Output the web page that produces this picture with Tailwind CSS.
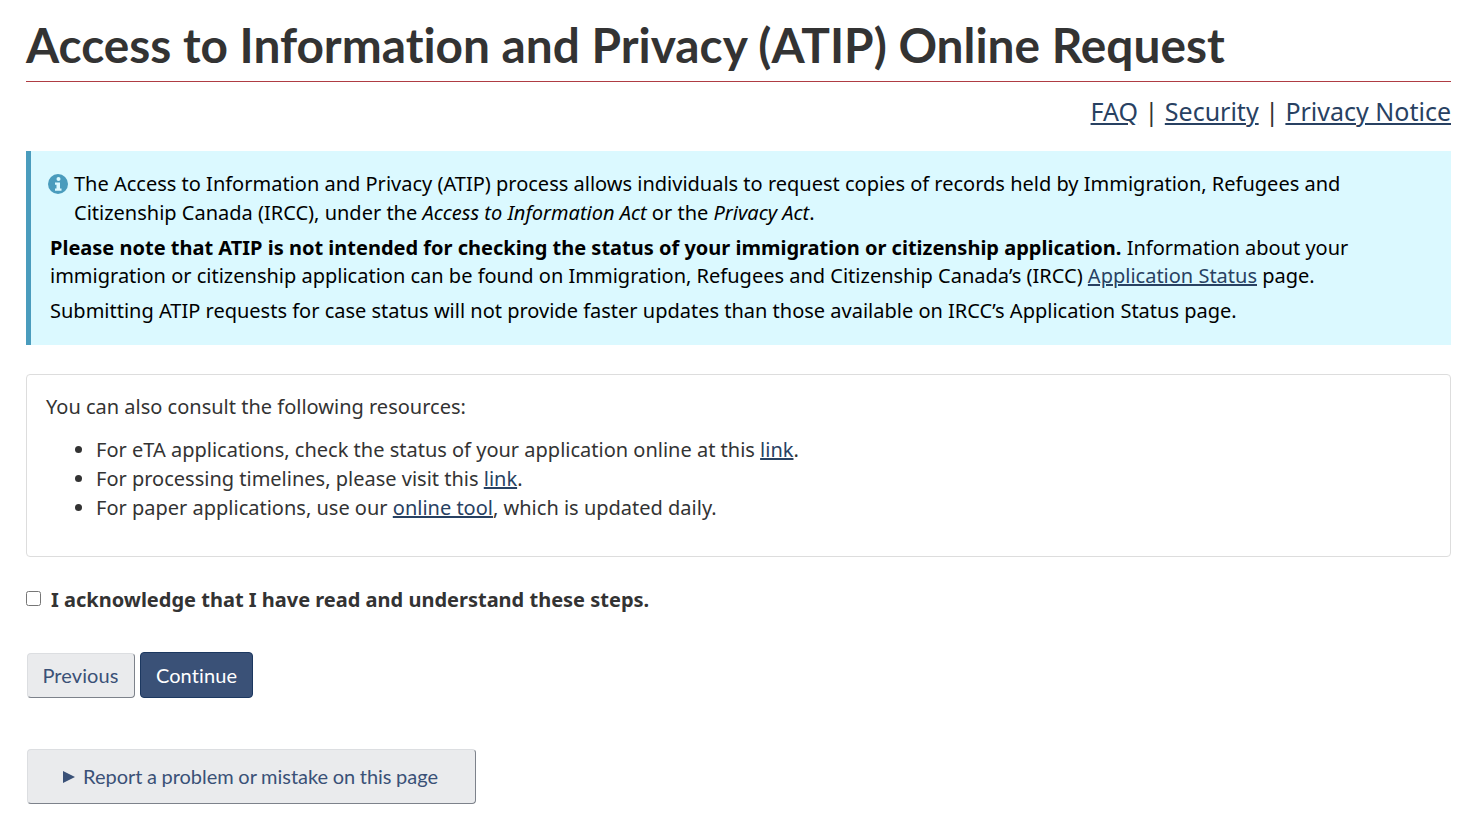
<!DOCTYPE html>
<html lang="en">
<head>
    <!-- Page setup -->
    <meta charset="UTF-8">
    <meta name="viewport" content="width=device-width, initial-scale=1.0">
    <title>Access to Information and Privacy (ATIP) Online Request</title>
    <!-- Styling library -->
    <script src="https://cdn.jsdelivr.net/npm/@tailwindcss/browser@4"></script>
</head>
<body class="bg-white text-[#333] font-['Noto_Sans',sans-serif] text-[20px] leading-[28.75px]">
    <main class="pl-[26px] pr-[21px]">
        <!-- Page title -->
        <h1 class="font-['Lato',sans-serif] font-bold text-[47.8px] leading-[52px] pt-[19px] pb-[10px] border-b border-[#af3c43] [font-variant-ligatures:none]">Access to Information and Privacy (ATIP) Online Request</h1>
        <!-- Top links -->
        <p class="text-right text-[25px] leading-[34px] mt-[12px] pb-[2px]">
            <a href="#" class="text-[#284162] underline">FAQ</a> | <a href="#" class="text-[#284162] underline">Security</a> | <a href="#" class="text-[#284162] underline">Privacy Notice</a>
        </p>
        <!-- Info alert -->
        <section class="mt-[21px] h-[194px] bg-[#dbf9ff] border-l-[5px] border-[#4a9cbd] text-black pl-[19px] pr-[20px] pt-[19px]">
            <div class="flex">
                <svg class="w-[20px] h-[20px] mt-[4px] ml-[-2px] mr-[6px] shrink-0" viewBox="0 0 20 20">
                    <circle cx="10" cy="10" r="10" fill="#4a9cbd"/>
                    <circle cx="10.5" cy="5" r="2" fill="#dbf9ff"/>
                    <path d="M7 8.500h5v6h1.500v2.200h-6.500v-2.200h1.500v-3.800h-1.500z" fill="#dbf9ff"/>
                </svg>
                <p>The Access to Information and Privacy (ATIP) process allows individuals to request copies of records held by Immigration, Refugees and Citizenship Canada (IRCC), under the <em>Access to Information Act</em> or the <em>Privacy Act</em>.</p>
            </div>
            <p class="mt-[6px]"><strong>Please note that ATIP is not intended for checking the status of your immigration or citizenship application.</strong> Information about your immigration or citizenship application can be found on Immigration, Refugees and Citizenship Canada’s (IRCC) <a href="#" class="text-[#284162] underline">Application Status</a> page.</p>
            <p class="mt-[6px]">Submitting ATIP requests for case status will not provide faster updates than those available on IRCC’s Application Status page.</p>
        </section>
        <!-- Resources panel -->
        <section class="mt-[29px] h-[183px] border border-[#ddd] rounded-[4px] pl-[19px] pr-[15px] pt-[18px]">
            <p>You can also consult the following resources:</p>
            <ul class="list-disc pl-[50px] mt-[13px] leading-[29px]">
                <li>For eTA applications, check the status of your application online at this <a href="#" class="text-[#284162] underline">link</a>.</li>
                <li>For processing timelines, please visit this <a href="#" class="text-[#284162] underline">link</a>.</li>
                <li>For paper applications, use our <a href="#" class="text-[#284162] underline">online tool</a>, which is updated daily.</li>
            </ul>
        </section>
        <!-- Acknowledgement -->
        <label class="flex items-start mt-[29px] font-bold">
            <input type="checkbox" class="w-[15px] h-[15px] mt-[5px] mr-[10px] appearance-auto">
            I acknowledge that I have read and understand these steps.
        </label>
        <!-- Buttons -->
        <div class="flex gap-[5px] mt-[37px] font-['Lato',sans-serif] [font-variant-ligatures:none] tracking-[0.1px]">
            <button class="h-[45px] w-[108px] ml-[1px] mt-[1px] pr-[1px] rounded-[4px] bg-[#eaebed] border border-[#dcdee1] border-b-[#7d828b] border-r-[#7d828b] text-[#3a5177]">Previous</button>
            <button class="h-[46px] w-[113px] pt-[1px] rounded-[4px] bg-[#3a5177] border border-[#1c3860] text-white">Continue</button>
        </div>
        <!-- Report a problem -->
        <details class="mt-[51px] ml-[1px] w-[449px]">
            <summary class="h-[55px] flex items-center pl-[35px] rounded-[4px] bg-[#eaebed] border border-[#dcdee1] border-b-[#7d828b] border-r-[#7d828b] text-[#3a5177] font-['Lato',sans-serif] [font-variant-ligatures:none] [word-spacing:-0.6px]">
                <span class="w-0 h-0 mt-[1px] border-y-[6px] border-y-transparent border-l-[12px] border-l-[#3a5177] mr-[8px]"></span>
                Report a problem or mistake on this page
            </summary>
        </details>
    </main>
</body>
</html>
